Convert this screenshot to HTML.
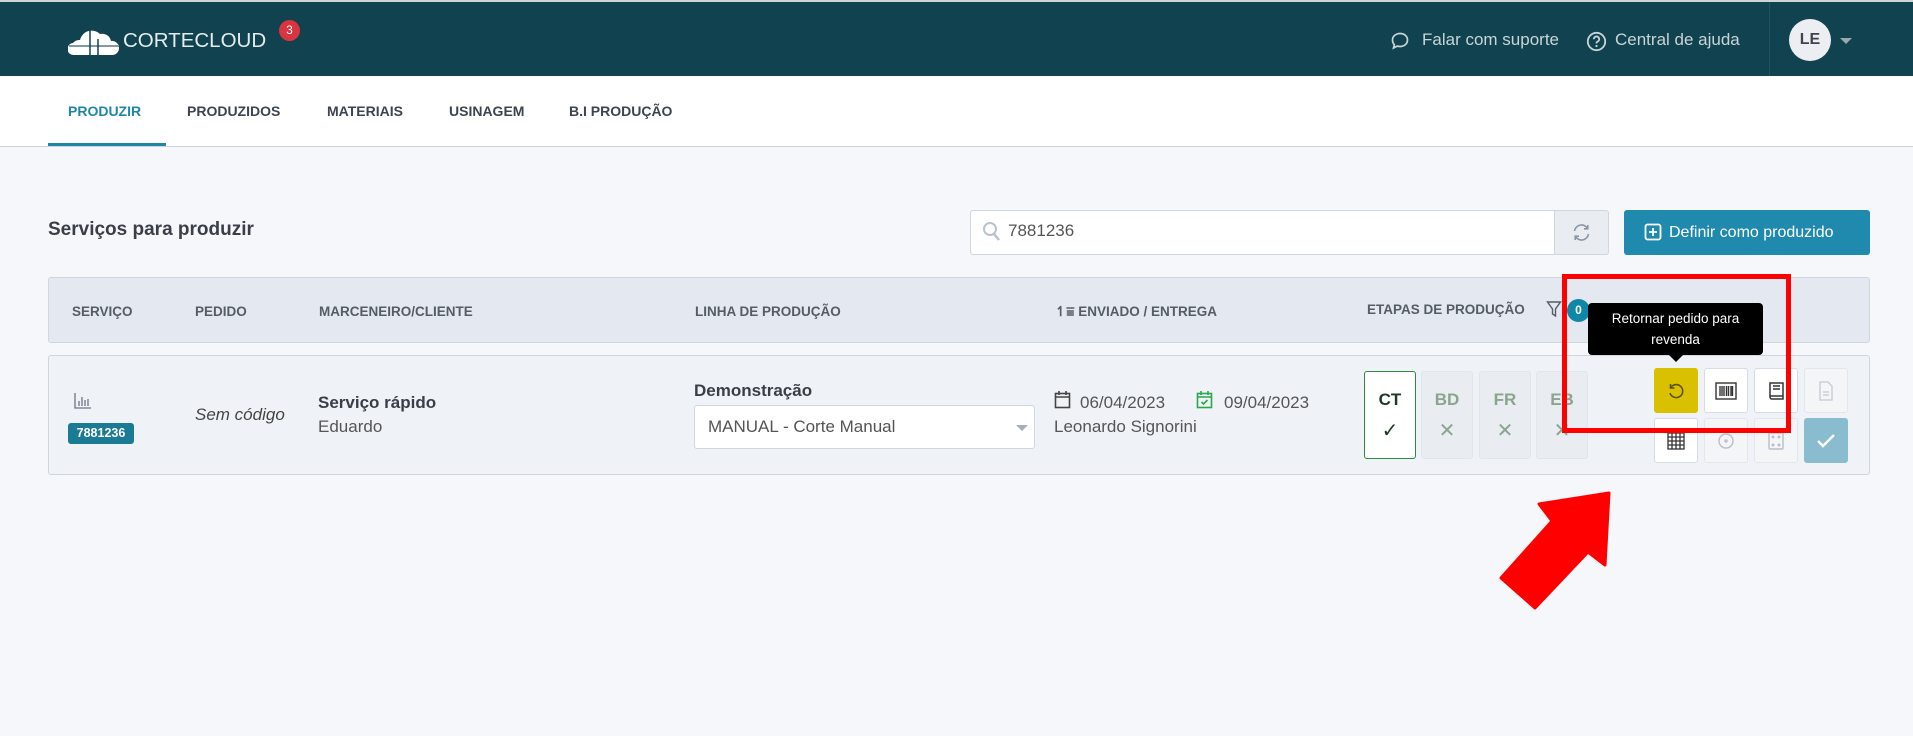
<!DOCTYPE html>
<html><head><meta charset="utf-8"><style>
*{box-sizing:border-box;margin:0;padding:0}
body{width:1913px;height:736px;overflow:hidden;background:#f5f7fb;font-family:"Liberation Sans",Arial,sans-serif;position:relative;color:#444}
.a{position:absolute}
.hdr{left:0;top:0;width:1913px;height:76px;background:#10434f;border-top:2px solid #cfd4d8}
.nav{left:0;top:76px;width:1913px;height:71px;background:#fff;border-bottom:1px solid #c9d3de}
.tab{position:absolute;top:27px;font-size:14px;font-weight:bold;color:#3d4450}
.th{position:absolute;top:26px;font-size:13.5px;font-weight:bold;color:#555c66}
.btn{position:absolute;width:44px;height:45px;background:#fff;border:1px solid #d6dce3;border-radius:3px;display:flex;align-items:center;justify-content:center}
.stg{position:absolute;top:371px;width:52px;height:88px;background:#e9edf1;border:1px solid #e1e6eb;border-radius:3px;text-align:center;font-weight:bold;font-size:17px;color:#8aa58f}
.stg b{display:block;margin-top:18px}
.stg i{display:block;font-style:normal;font-weight:normal;font-size:20px;margin-top:8px}
</style></head><body>
<div class="a hdr">
 <svg class="a" style="left:68px;top:25px" width="52" height="29" viewBox="0 0 52 29"><path d="M6 28a6 6 0 0 1-1-12a8 8 0 0 1 7-3a12 12 0 0 1 20-6a9 9 0 0 1 11 7a7 7 0 0 1 2 14z" fill="#fff"/><path d="M1 19h50" stroke="#7f9aa2" stroke-width="2"/><path d="M22 1v28M30 12v17" stroke="#10434f" stroke-width="1.5"/></svg>
 <div class="a" style="left:123px;top:27px;font-size:20.5px;color:#e4ecee;letter-spacing:0">CORTECLOUD</div>
 <div class="a" style="left:279px;top:18px;width:21px;height:21px;border-radius:50%;background:#d9343f;color:#fff;font-size:12px;text-align:center;line-height:21px">3</div>
 <svg class="a" style="left:1390px;top:29px" width="20" height="20" viewBox="0 0 20 20"><path d="M10 2.5c4.4 0 7.5 2.8 7.5 6.5s-3.1 6.5-7.5 6.5c-1 0-2-.1-2.8-.4L3.5 17l.8-3.4C3 12.4 2.5 10.8 2.5 9 2.5 5.3 5.6 2.5 10 2.5z" fill="none" stroke="#c9d4d8" stroke-width="1.7"/></svg>
 <div class="a" style="left:1422px;top:28px;font-size:17px;color:#c9d4d8">Falar com suporte</div>
 <svg class="a" style="left:1586px;top:29px" width="21" height="21" viewBox="0 0 21 21"><circle cx="10.5" cy="10.5" r="8.7" fill="none" stroke="#c9d4d8" stroke-width="1.8"/><path d="M7.8 8.2a2.7 2.7 0 1 1 3.8 2.4c-.8.4-1.1.9-1.1 1.8" fill="none" stroke="#c9d4d8" stroke-width="1.8"/><circle cx="10.5" cy="15" r="1.1" fill="#c9d4d8"/></svg>
 <div class="a" style="left:1615px;top:28px;font-size:17px;color:#c9d4d8">Central de ajuda</div>
 <div class="a" style="left:1769px;top:0;width:1px;height:76px;background:#1d5461"></div>
 <div class="a" style="left:1789px;top:17px;width:42px;height:42px;border-radius:50%;background:#eceef2;color:#3d4450;font-weight:bold;font-size:16px;text-align:center;line-height:42px">LE</div>
 <div class="a" style="left:1840px;top:36px;width:0;height:0;border-left:6px solid transparent;border-right:6px solid transparent;border-top:6px solid #9aa9b0"></div>
</div>
<div class="a nav">
 <div class="tab" style="left:68px;color:#1e87a8">PRODUZIR</div>
 <div class="tab" style="left:187px">PRODUZIDOS</div>
 <div class="tab" style="left:327px">MATERIAIS</div>
 <div class="tab" style="left:449px">USINAGEM</div>
 <div class="tab" style="left:569px">B.I PRODUÇÃO</div>
 <div class="a" style="left:48px;top:67px;width:118px;height:3px;background:#1e87a8"></div>
</div>
<div class="a" style="left:48px;top:219px;font-size:19px;font-weight:bold;color:#3a3f47">Serviços para produzir</div>
<div class="a" style="left:970px;top:210px;width:585px;height:45px;background:#fff;border:1px solid #cfd6de;border-radius:3px 0 0 3px"></div>
<svg class="a" style="left:982px;top:221px" width="20" height="22" viewBox="0 0 20 22"><circle cx="8" cy="8" r="6" fill="none" stroke="#b8c2cc" stroke-width="2"/><path d="M12 13l5 6" stroke="#b8c2cc" stroke-width="2.5"/></svg>
<div class="a" style="left:1008px;top:221px;font-size:17px;color:#555">7881236</div>
<div class="a" style="left:1554px;top:210px;width:55px;height:45px;background:#e9edf2;border:1px solid #cfd6de;border-radius:0 3px 3px 0"></div>
<svg class="a" style="left:1571px;top:222px" width="21" height="21" viewBox="0 0 21 21" fill="none" stroke="#8a96a3" stroke-width="1.6"><path d="M3.5 9a7 7 0 0 1 13-2.5M17.5 12a7 7 0 0 1-13 2.5"/><path d="M16.8 3v3.8H13M4.2 18v-3.8H8"/></svg>
<div class="a" style="left:1624px;top:210px;width:246px;height:45px;background:#1f8aad;border-radius:3px;color:#fff;font-size:16px;line-height:45px;padding-left:45px">Definir como produzido</div>
<svg class="a" style="left:1644px;top:223px" width="18" height="18" viewBox="0 0 18 18" fill="none" stroke="#fff" stroke-width="1.8"><rect x="1.5" y="1.5" width="15" height="15" rx="2"/><path d="M9 5v8M5 9h8"/></svg>

<div class="a" style="left:48px;top:277px;width:1822px;height:66px;background:#e4e9f1;border:1px solid #cfd6de;border-radius:3px">
 <div class="th" style="left:23px">SERVIÇO</div>
 <div class="th" style="left:146px">PEDIDO</div>
 <div class="th" style="left:270px">MARCENEIRO/CLIENTE</div>
 <div class="th" style="left:646px">LINHA DE PRODUÇÃO</div>
 <div class="th" style="left:1006px">↿⩸ ENVIADO / ENTREGA</div>
 <div class="th" style="left:1318px;top:24px">ETAPAS DE PRODUÇÃO</div>
 <svg class="a" style="left:1497px;top:22px" width="16" height="18" viewBox="0 0 16 18"><path d="M1.5 2h13l-5 7v7l-3-2V9z" fill="none" stroke="#555c66" stroke-width="1.4"/></svg>
</div>
<div class="a" style="left:1567px;top:299px;width:23px;height:23px;border-radius:50%;background:#0e87a8;color:#fff;font-weight:bold;font-size:12px;text-align:center;line-height:23px">0</div>

<div class="a" style="left:48px;top:355px;width:1822px;height:120px;background:#eff3f7;border:1px solid #cfd6de;border-radius:3px"></div>
<svg class="a" style="left:74px;top:392px" width="18" height="17" viewBox="0 0 18 17" fill="none" stroke="#6b7580" stroke-width="1.3"><path d="M1 1v15h16M5 14V9M8 14V5M11 14V8M14 14V7"/></svg>
<div class="a" style="left:68px;top:423px;width:66px;height:21px;background:#1b7a94;border-radius:3px;color:#fff;font-weight:bold;font-size:12.5px;text-align:center;line-height:21px">7881236</div>
<div class="a" style="left:195px;top:405px;font-size:17px;font-style:italic;color:#444">Sem código</div>
<div class="a" style="left:318px;top:393px;font-size:17px;font-weight:bold;color:#3a3f47">Serviço rápido</div>
<div class="a" style="left:318px;top:417px;font-size:17px;color:#555">Eduardo</div>
<div class="a" style="left:694px;top:381px;font-size:17px;font-weight:bold;color:#3a3f47">Demonstração</div>
<div class="a" style="left:694px;top:405px;width:341px;height:44px;background:#fff;border:1px solid #cfd6de;border-radius:3px;font-size:17px;color:#555;line-height:42px;padding-left:13px">MANUAL - Corte Manual</div>
<div class="a" style="left:1016px;top:425px;border-left:6px solid transparent;border-right:6px solid transparent;border-top:6px solid #a6b0ba"></div>
<svg class="a" style="left:1054px;top:390px" width="18" height="19" viewBox="0 0 18 19" fill="none" stroke="#444" stroke-width="1.6"><rect x="1.5" y="3.5" width="14" height="14"/><path d="M1.5 7h14M5 1v4M12 1v4"/></svg>
<div class="a" style="left:1080px;top:393px;font-size:17px;color:#555">06/04/2023</div>
<svg class="a" style="left:1196px;top:390px" width="18" height="19" viewBox="0 0 18 19" fill="none" stroke="#2aa84a" stroke-width="1.6"><rect x="1.5" y="3.5" width="14" height="14"/><path d="M1.5 7h14M5 1v4M12 1v4M5.5 12l2 2 4-4"/></svg>
<div class="a" style="left:1224px;top:393px;font-size:17px;color:#555">09/04/2023</div>
<div class="a" style="left:1054px;top:417px;font-size:17px;color:#555">Leonardo Signorini</div>

<div class="stg" style="left:1364px;background:#fff;border:1.5px solid #2e8b3a;color:#1d3a22"><b>CT</b><i>✓</i></div>
<div class="stg" style="left:1421px"><b>BD</b><i>✕</i></div>
<div class="stg" style="left:1479px"><b>FR</b><i>✕</i></div>
<div class="stg" style="left:1536px"><b>EB</b><i>✕</i></div>

<div class="btn" style="left:1654px;top:368px;background:#d9c100;border-color:#d9c100"><svg width="20" height="20" viewBox="0 0 20 20" fill="none" stroke="#5a5200" stroke-width="1.6"><path d="M4.5 7A6.5 6.5 0 1 1 4 12"/><path d="M4.5 3v4h4"/></svg></div>
<div class="btn" style="left:1704px;top:368px"><svg width="22" height="18" viewBox="0 0 22 18" fill="none" stroke="#333" stroke-width="1.4"><rect x="1" y="1" width="20" height="16"/><path d="M5 4v10M7 4v10M9 4v10M11.5 4v10M13.5 4v10M16 4v10M17.5 4v10"/></svg></div>
<div class="btn" style="left:1754px;top:368px"><svg width="18" height="20" viewBox="0 0 18 20" fill="none" stroke="#333" stroke-width="1.5"><path d="M3 2h13v16H5a2 2 0 0 1-2-2z"/><path d="M3 15h13M6 5h7M6 8h7"/></svg></div>
<div class="btn" style="left:1804px;top:368px;background:#f3f5f7;border-color:#e3e7ec"><svg width="16" height="20" viewBox="0 0 16 20" fill="none" stroke="#c4cad1" stroke-width="1.3"><path d="M2 1h8l4 4v14H2z"/><path d="M5 11h6M5 14h6"/></svg></div>
<div class="btn" style="left:1654px;top:418px"><svg width="18" height="18" viewBox="0 0 18 18" fill="none" stroke="#333" stroke-width="1.3"><rect x="1" y="1" width="16" height="16"/><path d="M1 5h16M1 9h16M1 13h16M5 1v16M9 1v16M13 1v16"/></svg></div>
<div class="btn" style="left:1704px;top:418px;background:#f3f5f7;border-color:#e3e7ec"><svg width="20" height="20" viewBox="0 0 20 20" fill="none" stroke="#b8bfc7" stroke-width="1.4"><circle cx="10" cy="10" r="7"/><circle cx="10" cy="10" r="1"/></svg></div>
<div class="btn" style="left:1754px;top:418px;background:#f3f5f7;border-color:#e3e7ec"><svg width="16" height="18" viewBox="0 0 16 18" fill="none" stroke="#b8bfc7" stroke-width="1.4"><rect x="1" y="1" width="14" height="16" rx="1"/><circle cx="5" cy="5" r=".8"/><circle cx="11" cy="5" r=".8"/><circle cx="5" cy="13" r=".8"/><circle cx="11" cy="13" r=".8"/></svg></div>
<div class="btn" style="left:1804px;top:418px;background:#89bccf;border-color:#89bccf"><svg width="20" height="16" viewBox="0 0 20 16" fill="none" stroke="#fff" stroke-width="2.4"><path d="M2 8l5 5L18 2"/></svg></div>

<div class="a" style="left:1588px;top:303px;width:175px;height:52px;background:#000;border-radius:4px;color:#fff;font-size:13.5px;text-align:center;line-height:21px;padding-top:5px">Retornar pedido para<br>revenda</div>
<div class="a" style="left:1669px;top:355px;border-left:7px solid transparent;border-right:7px solid transparent;border-top:7px solid #000"></div>

<div class="a" style="left:1562px;top:274px;width:229px;height:159px;border:5px solid #ff0000"></div>
<svg class="a" style="left:0;top:0" width="1913" height="736"><polygon points="1609,493 1539,504 1552,521 1501,578 1535,608 1588,552 1605,565" fill="#ff0000" stroke="#ff0000" stroke-width="3" stroke-linejoin="round"/></svg>
</body></html>
